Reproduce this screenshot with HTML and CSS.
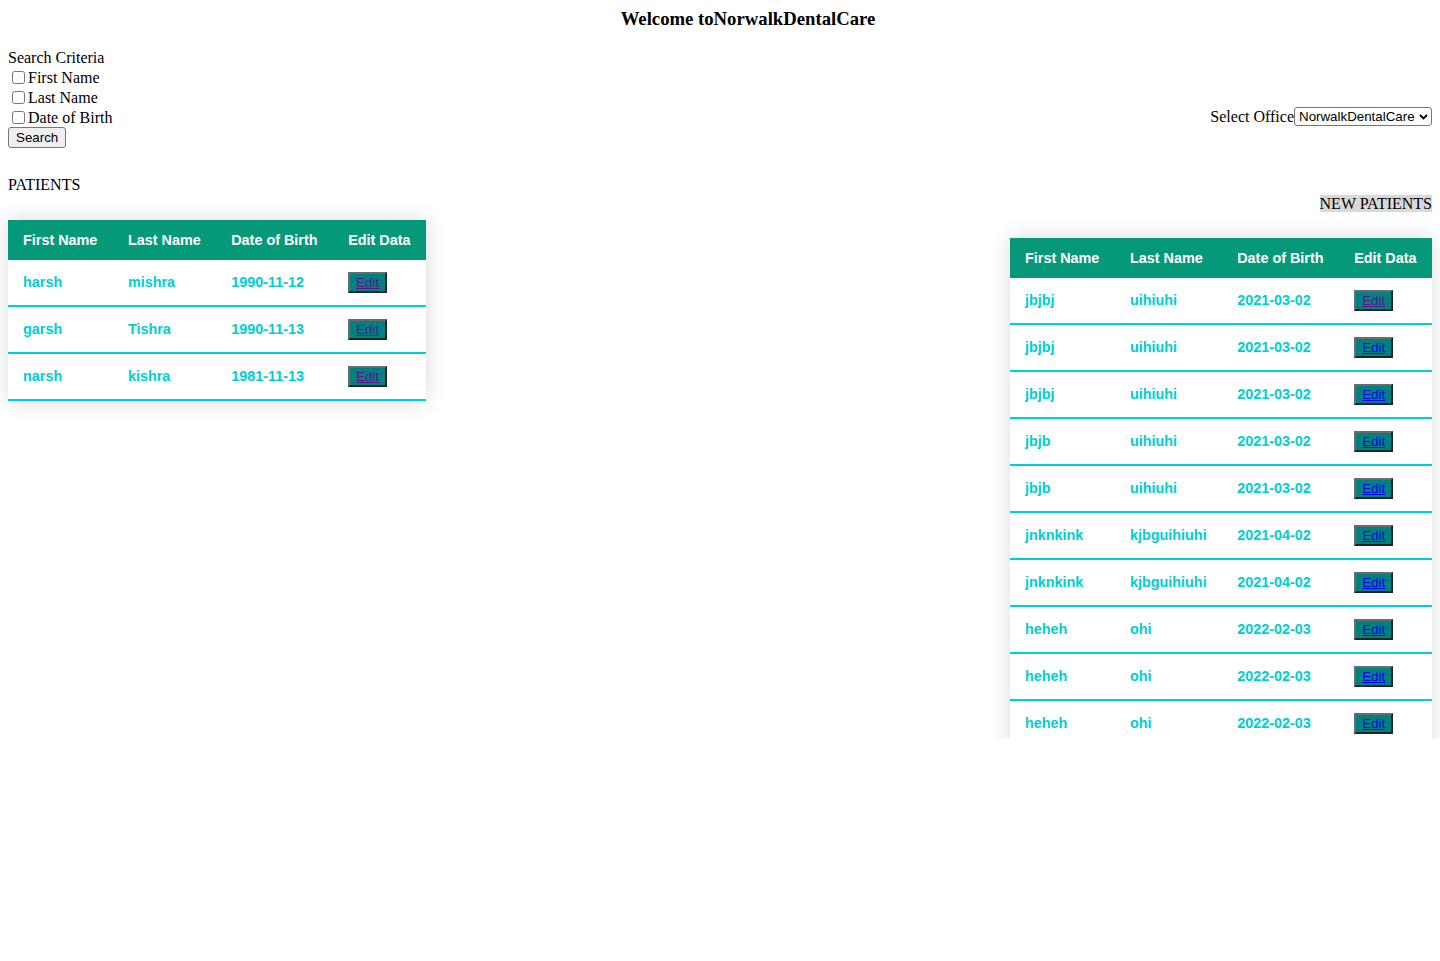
FILE: index.html
```html
<!DOCTYPE html>
<html>
<head>
<meta charset="utf-8">
<title>NorwalkDentalCare</title>
<link rel="stylesheet" href="styles.css">
</head>
<body>
<div class="page">
  <h3 class="title">Welcome toNorwalkDentalCare</h3>
  <div class="top">
    <div class="criteria">
      <div class="crit-label">Search Criteria</div>
      <label class="check"><input type="checkbox">First Name</label>
      <label class="check"><input type="checkbox">Last Name</label>
      <label class="check"><input type="checkbox">Date of Birth</label>
      <button class="search-btn">Search</button>
    </div>
    <div class="office">
      <span>Select Office</span>
      <span class="select-wrap">
        <select class="office-select"><option>NorwalkDentalCare</option></select>
        <svg class="chev" width="9" height="6" viewBox="0 0 9 6"><path d="M1 1 L4.5 4.5 L8 1" fill="none" stroke="#000" stroke-width="1.8"/></svg>
      </span>
    </div>
  </div>
  <div class="tables">
    <div class="left">
      <div class="section-label">PATIENTS</div>
      <table class="styled-table">
        <thead><tr><th>First Name</th><th>Last Name</th><th>Date of Birth</th><th>Edit Data</th></tr></thead>
        <tbody>
          <tr><td>harsh</td><td>mishra</td><td>1990-11-12</td><td><button class="edit"><a href="#" class="visited">Edit</a></button></td></tr>
          <tr><td>garsh</td><td>Tishra</td><td>1990-11-13</td><td><button class="edit"><a href="#" class="visited">Edit</a></button></td></tr>
          <tr><td>narsh</td><td>kishra</td><td>1981-11-13</td><td><button class="edit"><a href="#" class="visited">Edit</a></button></td></tr>
        </tbody>
      </table>
    </div>
    <div class="right">
      <div class="section-label new">NEW PATIENTS</div>
      <table class="styled-table">
        <thead><tr><th>First Name</th><th>Last Name</th><th>Date of Birth</th><th>Edit Data</th></tr></thead>
        <tbody>
          <tr><td>jbjbj</td><td>uihiuhi</td><td>2021-03-02</td><td><button class="edit"><a href="#" class="visited">Edit</a></button></td></tr>
          <tr><td>jbjbj</td><td>uihiuhi</td><td>2021-03-02</td><td><button class="edit"><a href="#">Edit</a></button></td></tr>
          <tr><td>jbjbj</td><td>uihiuhi</td><td>2021-03-02</td><td><button class="edit"><a href="#">Edit</a></button></td></tr>
          <tr><td>jbjb</td><td>uihiuhi</td><td>2021-03-02</td><td><button class="edit"><a href="#">Edit</a></button></td></tr>
          <tr><td>jbjb</td><td>uihiuhi</td><td>2021-03-02</td><td><button class="edit"><a href="#">Edit</a></button></td></tr>
          <tr><td>jnknkink</td><td>kjbguihiuhi</td><td>2021-04-02</td><td><button class="edit"><a href="#">Edit</a></button></td></tr>
          <tr><td>jnknkink</td><td>kjbguihiuhi</td><td>2021-04-02</td><td><button class="edit"><a href="#">Edit</a></button></td></tr>
          <tr><td>heheh</td><td>ohi</td><td>2022-02-03</td><td><button class="edit"><a href="#">Edit</a></button></td></tr>
          <tr><td>heheh</td><td>ohi</td><td>2022-02-03</td><td><button class="edit"><a href="#">Edit</a></button></td></tr>
          <tr><td>heheh</td><td>ohi</td><td>2022-02-03</td><td><button class="edit"><a href="#">Edit</a></button></td></tr>
        </tbody>
      </table>
    </div>
  </div>
</div>
</body>
</html>
```
FILE: styles.css
```css
html, body {
  margin: 0;
  padding: 0;
  background: #fff;
}
body {
  font-family: "Liberation Serif", "Times New Roman", serif;
  font-size: 16px;
  color: #000;
}
.page {
  box-sizing: border-box;
  height: 739px;
  overflow: hidden;
  padding: 8px;
}
.title {
  margin: 0 0 18px;
  padding-left: 56px;
  text-align: center;
  font-size: 18.72px;
  line-height: 22px;
  font-weight: bold;
}
.top {
  display: flex;
  justify-content: space-between;
  align-items: flex-start;
}
.criteria {
  display: flex;
  flex-direction: column;
  align-items: flex-start;
}
.crit-label {
  line-height: 19px;
}
.check {
  display: flex;
  align-items: center;
  height: 20px;
  line-height: 20px;
  padding-top: 1px;
  box-sizing: border-box;
}
.check input {
  width: 13px;
  height: 13px;
  margin: 0 3px 0 4px;
}
.search-btn {
  font-family: "Liberation Sans", Arial, sans-serif;
  font-size: 13.33px;
  height: 21px;
  padding: 0 7px;
  border: 1px solid #767676;
  border-radius: 3px;
  background: #efefef;
  color: #000;
  line-height: 17px;
}
.office {
  margin-top: 59px;
  display: flex;
  align-items: center;
  line-height: 19px;
}
.select-wrap {
  position: relative;
  display: inline-flex;
}
.office-select {
  -webkit-appearance: none;
  appearance: none;
  font-family: "Liberation Sans", Arial, sans-serif;
  font-size: 13.33px;
  width: 138px;
  height: 19px;
  padding: 0 14px 0 4px;
  border: 1px solid #767676;
  border-radius: 3px;
  background: #fff;
  color: #000;
  line-height: 17px;
}
.chev {
  position: absolute;
  right: 4px;
  top: 7px;
  pointer-events: none;
}
.tables {
  margin-top: 28px;
  display: flex;
  justify-content: space-between;
  align-items: flex-start;
}
.right {
  padding-top: 19px;
  display: flex;
  flex-direction: column;
  align-items: flex-end;
}
.section-label {
  line-height: 18px;
}
.section-label.new {
  line-height: 17px;
  background: #d9d9d9;
}
.styled-table {
  border-collapse: collapse;
  margin-top: 26px;
  font-family: "Liberation Sans", Arial, sans-serif;
  font-size: 14.4px;
  font-weight: bold;
  box-shadow: 0 0 20px rgba(0, 0, 0, 0.15);
  background: #fff;
}
.left .styled-table {
  width: 418px;
}
.right .styled-table {
  width: 422px;
}
.styled-table thead tr {
  background: #05997a;
  color: #fff;
  text-align: left;
}
.styled-table th {
  padding: 12px 15px;
  line-height: 16px;
  white-space: nowrap;
}
.styled-table td {
  padding: 12px 15px;
  line-height: 21px;
  color: #00ced1;
  white-space: nowrap;
}
.styled-table tbody tr {
  border-bottom: 2px solid #00ced1;
}
.edit {
  display: block;
  box-sizing: border-box;
  height: 21px;
  padding: 0 6px;
  background: #008080;
  border-style: solid;
  border-width: 2px;
  border-color: #6b6b6b #222 #222 #6b6b6b;
  font-family: "Liberation Sans", Arial, sans-serif;
  font-size: 13.33px;
  line-height: 17px;
}
.edit a {
  color: #0000ee;
  text-decoration: underline;
  font-weight: normal;
}
.edit a.visited {
  color: #551a8b;
}
```
